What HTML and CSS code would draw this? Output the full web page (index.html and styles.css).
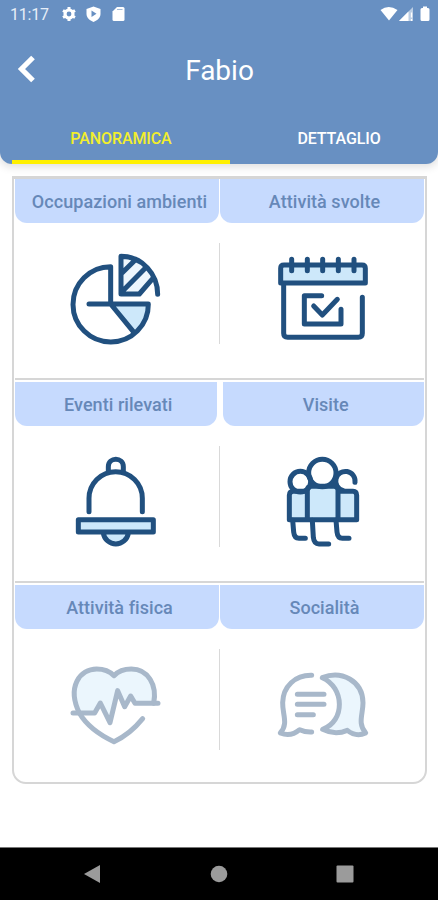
FILE: index.html
```html
<!doctype html>
<html lang="it">
<head>
    <meta charset="UTF-8">
    <title>Fabio</title>
    <link rel="stylesheet" href="styles.css">
</head>
<body>
<div class="header">
    <div class="status-bar">
        <span class="clock">11:17</span>
        <svg class="status-left" viewBox="0 0 70 20">
            <g fill="none" stroke="#fff">
                <circle cx="9" cy="10" r="4" stroke-width="3.2"/>
                <path d="M9 3v2M9 15v2M3 6.500l1.800 1M13.200 12.500l1.800 1M3 13.500l1.800-1M13.200 7.500l1.800-1" stroke-width="3"/>
            </g>
            <path d="M33.500 2.500l7 2.500v5c0 3.500-3 6.500-7 8-4-1.500-7-4.500-7-8V5z" fill="#fff"/>
            <path d="M31.500 6.500v6.500l5-3.200z" fill="#6890c2"/>
            <path d="M57 3h6q1.500 0 1.500 1.500v11q0 1.500-1.500 1.500h-9q-1.500 0-1.500-1.500V7.500z" fill="#fff"/>
            <path d="M57 5.500h5.500" stroke="#6890c2" stroke-width="1" opacity=".6"/>
        </svg>
        <svg class="status-right" viewBox="0 0 52 20">
            <path d="M.500 6q8-6 17 0L9 16.500z" fill="#fff"/>
            <path d="M33 3v14H19z" fill="#fff" opacity=".55"/>
            <path d="M28.500 7.500V17H19z" fill="#fff"/>
            <path d="M31.500 8.500v5M31.500 15v2" stroke="#fff" stroke-width="1.300"/>
            <path d="M43 2.500h4V4h1q1.500 0 1.500 1.500v10q0 1.500-1.500 1.500h-6q-1.500 0-1.500-1.500v-10Q40.500 4 42 4h1z" fill="#fff"/>
        </svg>
    </div>
    <div class="title-bar">
        <svg class="back" viewBox="0 0 20 28"><path d="M17 2.500L5.500 14 17 25.500" fill="none" stroke="#fff" stroke-width="5.200"/></svg>
        <h1>Fabio</h1>
    </div>
    <div class="tabs">
        <a class="tab active">PANORAMICA</a>
        <a class="tab">DETTAGLIO</a>
    </div>
</div>

<div class="content">
    <div class="card">
        <div class="row">
            <div class="cell">
                <div class="label">Occupazioni ambienti</div>
                <!--grafico a torta-->
                <svg class="icon" viewBox="0 0 330 330">
                    <path class="fill" d="M152 177H265C262 210 248 238 220 258z"/>
                    <path class="fill light" d="M183 35C225 38 262 60 278 95L238 147H183z"/>
                    <path d="M152 177V65A113 113 0 1 0 265 177H87M152 177L220 260"/>
                    <path d="M183 34V147H238L278 101M183 34C248 34 293 88 293 148M186 84L228 43M188 138L257 68"/>
                </svg>
            </div>
            <div class="cell">
                <div class="label">Attività svolte</div>
                <!--calendario-->
                <svg class="icon" viewBox="0 0 330 330">
                    <path class="fill" d="M38 60H290V114H38z"/>
                    <path d="M38 114V70Q38 60 48 60H282Q292 60 292 70V114zM47 114V265Q47 277 59 277H271Q283 277 283 265V157"/>
                    <path d="M71 43V77M118 43V77M164 43V77M211 43V77M258 43V77M161 152H109V237H219V193M137 183L163 210L208 163"/>
                </svg>
            </div>
        </div>
        <div class="row wide">
            <div class="cell">
                <div class="label">Eventi rilevati</div>
                <!--campanella-->
                <svg class="icon" viewBox="0 -6 330 330">
                    <path class="fill" d="M54 208H281V246H205A38 38 0 0 1 130 246H54z"/>
                    <path d="M55 209H280V246H55zM130 250A38 38 0 0 0 205 250M87 185V145A79 79 0 0 1 247 145V185"/>
                    <path d="M145 65V50C145 20 190 20 190 50V65"/>
                </svg>
            </div>
            <div class="cell">
                <div class="label">Visite</div>
                <!--gruppo di persone-->
                <svg class="icon" viewBox="0 -6 330 330">
                    <path class="fill" d="M66 124H118V109H210V124H262V209H66z"/>
                    <circle cx="163" cy="69" r="41"/>
                    <circle cx="97" cy="95" r="31"/>
                    <path d="M261 97A29 29 0 1 0 224 121"/>
                    <path d="M118 209V121Q118 109 130 109H198Q210 109 210 121V209zM116 124H76Q64 124 64 136V209H118M210 124H255Q266 124 266 136V209H210"/>
                    <path d="M74 211L77 246Q79 265 93 265H112M133 211L136 262Q138 282 153 282H182M204 211L207 246Q209 265 223 265H243"/>
                </svg>
            </div>
        </div>
        <div class="row">
            <div class="cell">
                <div class="label">Attività fisica</div>
                <!--battito cardiaco-->
                <svg class="icon disabled" viewBox="0 -12 330 330">
                    <path class="fill" d="M58 174C20 95 60 42 110 42Q142 42 162 62Q181 42 214 42C264 42 292 90 281 145H225L212 123L194 155L173 107L150 203L121 144L104 174z"/>
                    <path d="M281 145C292 90 264 42 214 42Q181 42 162 62Q142 42 110 42C60 42 20 95 58 174C78 208 119 240 162 260Q210 238 248 191"/>
                    <path d="M39 174H104L121 144L150 203L173 107L194 155L212 123L225 145H294"/>
                </svg>
            </div>
            <div class="cell">
                <div class="label">Socialità</div>
                <!--fumetti-->
                <svg class="icon disabled" viewBox="0 -12 330 330">
                    <path class="fill" d="M163 68C220 45 284 77 285 143C285 178 268 206 293 232Q266 248 238 224Q201 242 164 223C232 198 230 98 163 68z"/>
                    <path d="M131 61C82 60 45 94 44 143C43 179 62 205 37 234Q68 247 95 224Q112 232 131 231"/>
                    <path d="M163 68C220 45 284 77 285 143C285 178 268 206 293 234Q264 247 238 226Q201 242 164 223C232 198 230 98 163 68zM88 118H168M88 148H168M88 179H136"/>
                </svg>
            </div>
        </div>
    </div>
</div>

<div class="nav-bar">
    <svg viewBox="0 0 18 18"><path d="M1 9L17 0V18z"/></svg>
    <svg viewBox="0 0 18 18"><circle cx="9" cy="9" r="8.300"/></svg>
    <svg viewBox="0 0 18 18"><rect x=".500" y=".500" width="17" height="17" rx="1"/></svg>
</div>
</body>
</html>
```
FILE: styles.css
```css
* {
    margin: 0;
    padding: 0;
    box-sizing: border-box;
}

body {
    height: 900px;
    display: flex;
    flex-direction: column;
    font-family: Roboto, sans-serif;
    background-color: #fff;
    overflow: hidden;
}

.header {
    height: 164px;
    flex-shrink: 0;
    display: flex;
    flex-direction: column;
    color: #fff;
    background-color: #6890c2;
    border-radius: 0 0 12px 12px;
    box-shadow: 0 2px 9px 1px rgba(0, 0, 0, .13);
}

.status-bar {
    height: 34px;
    padding: 4px 6px 0 10px;
    display: flex;
    align-items: flex-start;
}

.clock {
    width: 50px;
    font-size: 16px;
    line-height: 22px;
    letter-spacing: -.2px;
    color: #e6eef8;
}

.status-left {
    width: 70px;
    height: 20px;
}

.status-right {
    width: 52px;
    height: 20px;
    margin-left: auto;
}

.title-bar {
    height: 78px;
    padding: 0 16px;
    display: flex;
    align-items: flex-start;
}

.back {
    width: 20px;
    height: 28px;
    margin-top: 21px;
}

.title-bar h1 {
    flex: 1;
    margin-top: 19px;
    padding-right: 19px;
    text-align: center;
    font-size: 28px;
    font-weight: 400;
    line-height: 36px;
}

.tabs {
    height: 52px;
    padding-left: 12px;
    display: flex;
}

.tab {
    width: 218px;
    flex-shrink: 0;
    line-height: 53px;
    text-align: center;
    font-size: 16px;
    font-weight: 500;
    letter-spacing: -.1px;
}

.tab.active {
    color: #f2ee2d;
    border-bottom: 4px solid #fff000;
}

.content {
    flex: 1;
    padding: 12px 11px 0 12px;
}

.card {
    height: 608px;
    padding: 0 1px;
    background-color: #fff;
    border: solid #d6d6d6;
    border-width: 3px 2px 2px;
    border-radius: 0 0 14px 14px;
}

.row {
    height: 203px;
    padding-top: 2px;
    display: grid;
    grid-template-columns: 1fr 1fr;
    column-gap: 1px;
    border-bottom: 2px solid #d6d6d6;
    /* linea verticale tra le due celle */
    background: linear-gradient(#d9d9d9, #d9d9d9) 204px 66px / 1px 101px no-repeat;
}

.row:first-child {
    height: 201px;
    padding-top: 0;
    background-position: 204px 64px;
}

.row:last-child {
    height: 198px;
    border-bottom: none;
}

.row.wide {
    column-gap: 6px;
}

.label {
    height: 44px;
    padding-left: 5px;
    border-radius: 0 0 12px 12px;
    background-color: #c6dafe;
    color: #6688b8;
    text-align: center;
    font-size: 18px;
    font-weight: 500;
    line-height: 46px;
    letter-spacing: .05px;
}

.icon {
    display: block;
    width: 110px;
    height: 110px;
    margin: 22px 0 0 45px;
    fill: none;
    stroke: #21507f;
    stroke-width: 15;
    stroke-linecap: round;
    stroke-linejoin: round;
}

.cell:last-child .icon {
    margin-left: 48px;
}

.wide .cell:last-child .icon {
    margin-left: 45px;
}

.icon .fill {
    fill: #cde8fa;
    stroke: none;
}

.icon .fill.light {
    fill: #edf6fd;
}

.icon.disabled {
    stroke: #a8b8ca;
}

.icon.disabled .fill {
    fill: #ebf6fd;
}

.nav-bar {
    height: 53px;
    flex-shrink: 0;
    padding: 0 84px 0 83px;
    display: flex;
    align-items: center;
    justify-content: space-between;
    background-color: #000;
    border-top: 1px solid #777;
}

.nav-bar svg {
    width: 18px;
    height: 18px;
    fill: #9b9b9b;
}
```
